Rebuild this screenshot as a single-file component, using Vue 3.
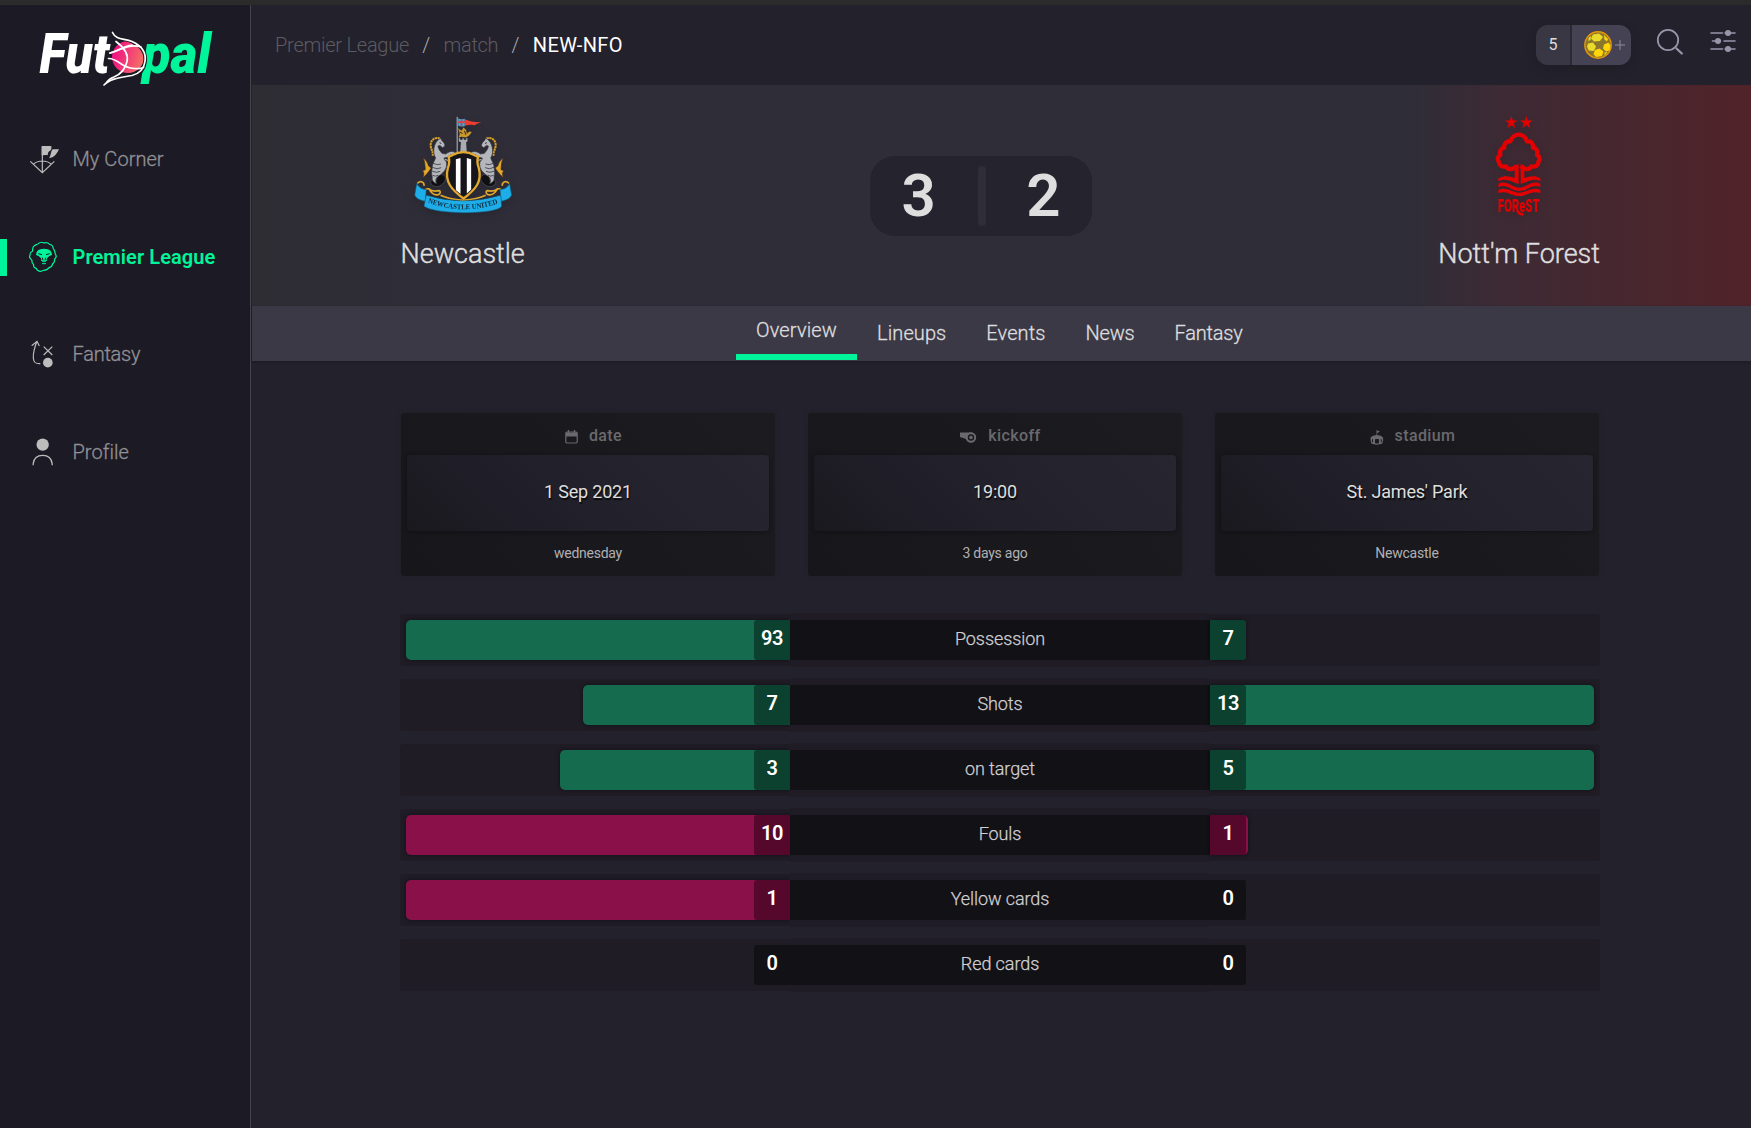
<script setup>
const nav = [
  { id: 'corner', label: 'My Corner' },
  { id: 'league', label: 'Premier League', active: true },
  { id: 'fantasy', label: 'Fantasy' },
  { id: 'profile', label: 'Profile' },
]
const tabs = ['Overview', 'Lineups', 'Events', 'News', 'Fantasy']
const cards = [
  { id: 'date', label: 'date', value: '1 Sep 2021', note: 'wednesday' },
  { id: 'kickoff', label: 'kickoff', value: '19:00', note: '3 days ago' },
  { id: 'stadium', label: 'stadium', value: "St. James' Park", note: 'Newcastle' },
]
const stats = [
  { label: 'Possession', home: 93, away: 7, tone: 'good' },
  { label: 'Shots', home: 7, away: 13, tone: 'good' },
  { label: 'on target', home: 3, away: 5, tone: 'good' },
  { label: 'Fouls', home: 10, away: 1, tone: 'bad' },
  { label: 'Yellow cards', home: 1, away: 0, tone: 'bad' },
  { label: 'Red cards', home: 0, away: 0, tone: 'bad' },
]
const share = (v, s) => (v ? (v / Math.max(s.home, s.away)) * 100 : 0) + '%'
</script>

<template>
  <div class="page">
    <div class="strip"></div>
    <div class="shell">
      <aside class="sidebar">
        <svg class="logo" viewBox="-10 -10 210 86" width="210" height="86">
          <defs>
            <linearGradient id="ball" x1="0" x2="1" y1="0.3" y2="0.6">
              <stop offset="0.1" stop-color="#ef1583" />
              <stop offset="0.95" stop-color="#f56c66" />
            </linearGradient>
          </defs>
          <text x="2.500" y="48" textLength="70" lengthAdjust="spacingAndGlyphs" class="word" fill="#fff">Fut</text>
          <text x="105.500" y="48" textLength="68.500" lengthAdjust="spacingAndGlyphs" class="word" fill="#00f59b">pal</text>
          <circle cx="91" cy="32" r="16" fill="url(#ball)" />
          <path d="M75.500 7.500c3.500 8 12 5.500 19.500 9 9 4 14.500 11 13 21-1 7-5 12-13 14-11 2-22 3-28 9" fill="none" stroke="#1c1a24" stroke-width="3.600" />
          <g fill="none" stroke="#fff" stroke-width="1.700" stroke-linecap="round">
            <path d="M75.500 7.500c3.500 8 12 5.500 19.500 9 9 4 14.500 11 13 20-1 7-5 12-13 14-11 2-22 3-28 9.500" />
            <path d="M79 16.500c8 6 13 12 11 20-2 9-7 13-13 15.500-3 1-5.500 2.500-7 5" />
            <path d="M73 28c6-1 13-7 22-8" /><path d="M73 28c9-2 20-10 31-6" />
            <path d="M71.500 33.500c8-.5 13 8 22 9.500 6 1 10 1 13-.5" />
          </g>
        </svg>
        <nav>
          <a v-for="n in nav" :key="n.label" class="item" :class="{ active: n.active }">
            <svg v-if="n.id === 'corner'" class="ico" viewBox="80 426 96 102" width="32" height="34" fill="none" stroke="#bdbdbd" stroke-width="3.500">
              <path d="M90 484l36 34 36-34M99 493c8-8 16-10 27-10s19 2 27 10M126 440v76" />
              <path d="M124 438h29v10c-5 8-10 4-11 18-6-2-10 0-18 0zM157 448h19c-8 16-15 25-30 26 7-8 4-18 11-26z" fill="#bdbdbd" stroke="none" />
            </svg>
            <svg v-else-if="n.id === 'league'" class="ico" viewBox="79 60 96 102" width="32" height="34" fill="none" stroke="#00f59b" stroke-width="3.600" stroke-linejoin="round">
              <path d="M101 77c5-1 6-5 11-5 4-5 12-6 17-3 7-2 14 0 18 4 8 1 10 6 11 13 5 5 5 11 6 16 4 6 2 12-2 15 0 7-1 12-6 14-1 7-5 11-11 12-4 6-10 8-16 8-5 3-13 4-18 0-4-1-3-4-4-6-6-1-9-5-8-11-5-4-6-8-5-13l-7-8c-2-4 2-7 1-10 0-6 4-8 8-10-1-8 0-13 5-16z" />
              <path d="M108 96c4-7 12-10 22-10s18 3 22 10l2 9-8 3-7 7-2 8h-14l-2-8-7-7-8-3z" fill="#00f59b" stroke="none" />
              <path d="M113 101l11 3M147 101l-11 3M125 113l2 8M135 113l-2 8" stroke="#1c1a24" stroke-width="3" />
              <path d="M123 120c0 4 3 5 7 5s7-1 7-5M124 131h12" stroke-width="3" />
            </svg>
            <svg v-else-if="n.id === 'fantasy'" class="ico" viewBox="82 355 96 102" width="32" height="34" fill="none" stroke="#bdbdbd" stroke-width="3.600">
              <path d="M96 381l16-13 7 14M112 368c-8 20-12 35-11 50 1 13 6 18 21 17M132 384l26 25M158 384l-26 25" />
              <circle cx="144.500" cy="432" r="14.500" fill="#bdbdbd" stroke="none" />
            </svg>
            <svg v-else class="ico" viewBox="82 646 96 102" width="32" height="34" fill="none" stroke="#bdbdbd" stroke-width="3.800">
              <circle cx="129" cy="675" r="18.500" fill="#bdbdbd" stroke="none" />
              <path d="M100.500 737v-5c2-16 13-25 28.500-25s26.500 9 28.500 25v5" />
            </svg>
            <span :class="'t-' + n.id">{{ n.label }}</span>
          </a>
        </nav>
      </aside>

      <main>
        <header class="top">
          <div class="crumbs">
            <span class="c1">Premier League</span><i>/</i><span class="c2">match</span><i>/</i><b>NEW-NFO</b>
          </div>
          <div class="tools">
            <div class="coins">
              <span class="count">5</span>
              <span class="buy">
                <svg viewBox="0 0 28 28" width="28" height="28">
                  <circle cx="14" cy="14" r="13.200" fill="#8b762c" stroke="#e8960a" stroke-width="1.400" />
                  <g fill="#ffd60a">
                    <path d="M9 3.500l6-1 4 3.500-3 4-6 .500-3-3z" fill="#e9da2b" />
                    <path d="M4 12.500l5-1 3 4-2 4.500-5.500-.500-1.500-4z" fill="#e9da2b" />
                    <path d="M11 19l4.500-1.500 4 3-1.500 4.500-6 1-2.500-3z" />
                    <path d="M20 13.500l4.500-2 2 3-1 5-3.500 1-3-3z" />
                    <path d="M20 4l4 4-1 2.500-2.500-2z" /><path d="M5 6.500L7 5l-.500 4-2.500 1z" fill="#e9da2b" /><path d="M20.500 21.500l3-.500-3 3.500z" />
                  </g>
                </svg>
                <svg viewBox="0 0 10 10" width="10" height="10" stroke="#8e8b9d" stroke-width="1"><path d="M5 0v10M0 5h10" /></svg>
              </span>
            </div>
            <svg class="search" viewBox="0 0 28 28" width="28" height="28" fill="none" stroke="#9895aa" stroke-linecap="round">
              <circle cx="12" cy="12" r="10.200" stroke-width="1.800" /><path d="M20.500 20.500l5.300 5" stroke-width="2.300" />
            </svg>
            <svg class="sliders" viewBox="0 0 26 24" width="26" height="24" stroke="#9895aa" stroke-width="1.600" stroke-linecap="round">
              <path d="M1 4h11.500M15 4h10M2.500 12h8M14 12h11M1 20h11.500M15 20h10" />
              <g fill="#9895aa" stroke="none"><circle cx="18" cy="4" r="3" /><circle cx="8" cy="12" r="3" /><circle cx="18" cy="20" r="3" /></g>
            </svg>
          </div>
        </header>

        <section class="hero">
          <div class="club home">
            <svg class="crest" viewBox="70 45 295 303" width="98" height="101">
              <path d="M200 50v108" stroke="#b9bbc0" stroke-width="3" />
              <path d="M203 55q10 4 20 1v22q-10 3-20-1z" fill="#3aa6dc" /><path d="M203 66h20M213 57v21" stroke="#e33c3c" stroke-width="5" />
              <path d="M223 57q20 10 50 9-16 4-20 9-16-3-30 2z" fill="#ee3d30" />
              <path d="M203 84l10 8 6-10 8 8 2 10 8-6 7 2-8 10-10 6-12-2-10 2 4-10z" fill="#c9982a" /><path d="M208 96l8 4M222 92l4 12" stroke="#30251a" stroke-width="3" />
              <path d="M204 113h6v5h5v-5h6v5h5v-5h6v13h-4l2 32h-22l2-32h-6z" fill="#a9abb1" stroke="#26242c" stroke-width="2" />
              <g id="horse">
                <path d="M148 115c-16-5-27 5-28 19 0 14 9 21 6 33" fill="none" stroke="#d9a127" stroke-width="6" stroke-dasharray="7 1.500" />
                <path d="M97 173c10 7 14 15 17 25l8 6-7 10c-6 7-10 13-18 19 3-10 4-16-2-21l9-3c-1-11-1-25-7-36z" fill="#e3a62b" stroke="#33291f" stroke-width="2" />
                <path d="M138 228c22-12 35 3 22 20-9 12-25 16-36 7-8-8-3-18 6-16-2 9 12 7 8-11z" fill="#101014" stroke="#55565c" stroke-width="2" />
                <path d="M150 114l4 8c6 4 9 10 9 16l-7 5-8-7-6 2c1 10 8 16 12 22l12 2c8-7 18-10 28-5l2 6c-12-3-18 2-26 9l-10 2c8 8 10 18 7 28-4 14-14 20-24 27-8 6-10 14-4 22-10-2-16-10-14-20-4-12-1-18 0-30 0-12 8-18 10-28-10-12-8-46 15-59z" fill="#b4b6bc" stroke="#35343b" stroke-width="2" />
                <path d="M127 190q14 7 24 2M125 202q15 8 27 1M125 214q13 6 24 0M126 226q9 5 17 0M160 178q12 6 17 18l-5 14" fill="none" stroke="#393a42" stroke-width="2.500" />
                <path d="M163 178q15 2 15 18 0 12-10 18" fill="none" stroke="#a4a6ac" stroke-width="4" />
                <path d="M147 128l5 2" stroke="#222" stroke-width="3" />
                <path d="M80 250c12-10 22-2 20 8M103 287c-6-16 1-22 12-20 8 8 16 8 30 5 8 2 3 14-7 13-10 0-18-9-23-18M150 286q25 12 68 15" fill="none" stroke="#dda72c" stroke-width="5" />
                <path d="M78 251c7 12 17 18 29 18l-3 35c-18-3-28-9-32-19z" fill="#1daeea" stroke="#14516c" stroke-width="2" />
              </g>
              <use href="#horse" transform="matrix(-1 0 0 1 436 0)" />
              <path d="M174 170c12-1 17-14 45-14s32 13 44 14c-4 13-4 20 2 34 11 42-11 66-46 92-35-26-58-50-47-92 6-14 6-21 2-34z" fill="#16151a" stroke="#e3a92e" stroke-width="7" stroke-linejoin="round" />
              <path d="M196 178l14-4v108l-14-12zM229 174l13 4v91l-13 12z" fill="#fff" />
              <path d="M107 286q110 34 224 0l3 33q-12 18-117 20-95-3-117-20z" fill="#1daeea" stroke="#14516c" stroke-width="1.500" />
              <path id="scroll" d="M111 308q107 41 219 0" fill="none" />
              <text class="motto"><textPath href="#scroll" textLength="216" lengthAdjust="spacingAndGlyphs">NEWCASTLE UNITED</textPath></text>
            </svg>
            <h2>Newcastle</h2>
          </div>
          <div class="score"><span>3</span><i></i><span>2</span></div>
          <div class="club away">
            <svg class="crest" viewBox="176 40 240 320" width="80" height="106.700" fill="#e30000">
              <path id="star" d="M273 46l4.600 13.500h14.400l-11.600 8.500 4.400 14-11.800-8.500-11.800 8.500 4.400-14-11.600-8.500h14.400z" />
              <use href="#star" x="45" />
              <path d="M289 196c-12 12-27 12-32 1-12 3-22-3-21-13-7-8-3-18 4-21-3-12 2-21 12-22-2-12 7-21 18-19 5-15 17-20 25-20s20 5 25 20c11-2 20 7 18 19 10 1 15 10 12 22 7 3 11 13 4 21 1 10-9 16-21 13-5 11-20 11-32-1" fill="none" stroke="#e30000" stroke-width="13" stroke-linejoin="round" />
              <path d="M283 194l12-3v59l-17-6c-13-6-25-10-44-2v-9c18-10 32-7 49-1zM312 194l-11-3v59l17-6c13-6 24-10 42-2v-9c-17-10-31-7-48-1z" />
              <path d="M234 249c26-12 40 12 63 12s37-24 63-12v10c-26-11-38 12-63 12s-37-23-63-12z" />
              <path d="M234 268c26-11 40 8 63 8s37-19 63-8v10c-26-11-38 8-63 8s-37-19-63-8z" />
              <text x="233" y="333" textLength="125" lengthAdjust="spacingAndGlyphs" class="forest">FOReST</text>
              <path d="M288 331c2 7 7 14 21 14v-8c-7 0-10-2-12-6z" />
            </svg>
            <h2>Nott'm Forest</h2>
          </div>
        </section>

        <div class="tabs">
          <a v-for="(t, i) in tabs" :key="t" :class="['tab' + i, { on: i === 0 }]">{{ t }}</a>
        </div>

        <section class="cards">
          <article v-for="c in cards" :key="c.id" :class="c.id">
            <h3>
              <svg v-if="c.id === 'date'" viewBox="0 0 13 14" width="13" height="14" fill="none" stroke="#6a696e">
                <rect x=".8" y="2" width="11.400" height="11" rx="1.200" stroke-width="1.200" /><path d="M1 4.500h11" stroke-width="4" /><path d="M3.500 0v3M9.500 0v3" stroke-width="1.400" />
              </svg>
              <svg v-else-if="c.id === 'kickoff'" viewBox="0 0 17 13" width="17" height="13" fill="none">
                <path d="M0 1.500h12a5 5 0 1 1-6 6.500L0 6z" fill="#6a696e" /><circle cx="11" cy="6.500" r="4.200" stroke="#6a696e" stroke-width="2" fill="#1b1a1f" /><circle cx="11" cy="6.500" r="1.800" fill="#6a696e" />
              </svg>
              <svg v-else viewBox="0 0 14 15" width="14" height="15" fill="#6a696e">
                <path d="M6.500 0l3.500 1.800-2.800 1.300V5c3.500.2 6 2 6 3.500s-.4 4-1 5c-2.800 1.500-8 1.500-10.800 0C.8 12 .5 10 .5 8.500.500 7 3 5.200 6.500 5z" /><path d="M2.500 9.200v3M5.500 9.500h3v3.500h-3zM11.300 9.200v3" stroke="#1b1a1f" fill="#1b1a1f" />
              </svg>
              <span>{{ c.label }}</span>
            </h3>
            <div class="value"><span>{{ c.value }}</span></div>
            <p><span>{{ c.note }}</span></p>
          </article>
        </section>

        <section class="stats">
          <div v-for="s in stats" :key="s.label" class="row" :class="s.tone">
            <div class="side left">
              <div class="bar" :class="{ zero: !s.home }" :style="{ width: share(s.home, s) }"><b>{{ s.home }}</b></div>
            </div>
            <div class="label"><span>{{ s.label }}</span></div>
            <div class="side right">
              <div class="bar" :class="{ zero: !s.away }" :style="{ width: share(s.away, s) }"><b>{{ s.away }}</b></div>
            </div>
          </div>
        </section>
      </main>
    </div>
  </div>
</template>

<style>
body { background: #23212b; }
</style>
<style scoped>
.page { height: 1128px; font-family: Roboto, sans-serif; font-weight: 400; background: #23212b; color: #dedede; display: flex; flex-direction: column; overflow: hidden; }
.strip { height: 5px; background: #2b2b2b; flex: none; }
.shell { flex: 1; display: flex; }
.sidebar { width: 250px; flex: none; background: #1c1a24; border-right: 1px solid #454448; margin-right: 1px; }
.logo { display: block; margin: 10px 0 0 27px; }
.word { font: italic 900 56px Roboto, sans-serif; }
nav { display: flex; flex-direction: column; margin-top: 9.500px; }
.item { height: 97.500px; display: flex; align-items: center; font-size: 20px; font-weight: 300; color: #929196; -webkit-text-stroke: 0.300px; letter-spacing: 0.050px; position: relative; }
.ico { margin-left: 27px; margin-right: 13.500px; flex: none; }
.item.active { color: #00f59b; font-weight: 600; -webkit-text-stroke: 0; }
.item.active::before { content: ""; position: absolute; left: 0; top: 30.500px; width: 6.500px; height: 37.500px; background: #00f59b; }
.item .t-league { letter-spacing: 0.080px; }
.item .t-fantasy { letter-spacing: -0.250px; }

main { flex: 1; min-width: 0; display: flex; flex-direction: column; }
.top { height: 80px; flex: none; display: flex; justify-content: space-between; }
.crumbs { display: flex; align-items: center; font-size: 20px; font-weight: 300; padding-left: 23px; height: 79px; color: #5d5b62; }
.crumbs i { font-style: normal; color: #aaa9ad; width: 34.500px; text-align: center; }
.crumbs b { font-weight: 400; color: #fff; letter-spacing: 0.400px; }
.c1 { letter-spacing: -0.240px; }
.c2 { letter-spacing: -0.300px; }
.tools { display: flex; }
.coins { width: 95px; height: 40px; margin-top: 20px; display: flex; gap: 2px; background: #2b2935; border-radius: 12px; overflow: hidden; box-shadow: 0 4px 12px rgba(0, 0, 0, 0.120); }
.count { width: 34px; background: #393744; font-size: 16px; line-height: 40px; text-align: center; }
.buy { flex: 1; background: #454253; display: flex; align-items: center; gap: 3px; padding-left: 12px; }
.search { margin: 23px 0 0 24.500px; }
.sliders { margin: 24px 15px 0 26.500px; }

.hero { height: 221px; flex: none; display: flex; justify-content: space-between; background: linear-gradient(90deg, #2e2d34 0, #2f2d38 14%, #2f2d38 77%, #3e2a34 84%, #4b262d 94%, #502329 100%); }
.club { display: flex; flex-direction: column; align-items: center; padding-top: 29.500px; }
.club h2 { margin: 22.500px 0 0; font-size: 27px; line-height: 32px; font-weight: 300; white-space: nowrap; -webkit-text-stroke: 0.450px; }
.crest { filter: drop-shadow(0 3px 4px rgba(0, 0, 0, 0.150)); flex: none; overflow: visible; }
.home { margin-left: 148.500px; }
.away { margin-right: 151px; padding-top: 28.500px; }
.away h2 { margin-top: 17.800px; }
.motto { font: bold 22px "Liberation Serif", serif; fill: #102a3c; }
.forest { font: 900 56px Roboto, sans-serif; }
.score { width: 222px; height: 80px; margin: 71px 0 0 -1px; border-radius: 25px; background: #25232d; display: flex; align-items: center; font-size: 60px; font-weight: 600; }
.score span { flex: 1; text-align: center; padding: 0 11px 2px 0; }
.score span:last-child { padding: 0 0 2px 9px; }
.score i { width: 7.500px; height: 60px; border-radius: 4px; background: #2f2d38; }

.tabs { height: 55px; flex: none; background: #3c3947; padding-left: 484px; display: flex; font-size: 20px; font-weight: 300; -webkit-text-stroke: 0.300px; box-shadow: 0 1px 3px rgba(0, 0, 0, 0.250); }
.tabs a { padding: 0 20px; line-height: 55px; }
.tabs .on { line-height: 48px; box-sizing: border-box; height: 54px; border-bottom: 6.500px solid #00f59b; }
.tab0 { letter-spacing: 0.150px; }
.tab1, .tab2 { letter-spacing: 0.100px; }
.tab3, .tab4 { letter-spacing: -0.200px; }

.cards { display: flex; gap: 33px; margin: 52px 0 0 149px; }
.cards article { width: 374px; height: 163px; box-sizing: border-box; padding: 0 6px; display: flex; flex-direction: column; background: linear-gradient(45deg, #17161b, #1c1b20); border-radius: 3px; box-shadow: 0 0 5px rgba(0, 0, 0, 0.120); }
.cards .stadium { width: 384px; }
.cards h3 { height: 42px; margin: 0; padding-left: 11px; display: flex; justify-content: center; align-items: center; gap: 11px; font-size: 16px; font-weight: 500; letter-spacing: 0.400px; color: #6a696e; }
.cards h3 svg { margin-top: 6px; }
.cards h3 span { margin-top: 3px; }
.value { height: 76px; display: flex; align-items: center; justify-content: center; border-radius: 4px; background: linear-gradient(45deg, #1a191e 0, #1e1c25 22%, #23212b 55%, #272530); font-size: 18px; letter-spacing: -0.200px; text-shadow: 1px 2px 1px #0a0a0c; box-shadow: 0 1px 4px rgba(0, 0, 0, 0.350); }
.value span { margin-top: -3px; }
.cards p { margin: 0; flex: 1; display: flex; align-items: center; justify-content: center; font-size: 14px; letter-spacing: -0.250px; color: #b0b0b2; }
.cards p span { margin-top: -1px; }

.stats { margin: 38px 0 0 148px; width: 1200px; display: flex; flex-direction: column; gap: 13px; }
.row { height: 52px; display: flex; background: #1f1c26; border-radius: 4px; }
.side { width: 384px; padding: 6px 0; display: flex; }
.left { padding-left: 6px; justify-content: flex-end; }
.right { padding-right: 6px; }
.bar { min-width: 36px; display: flex; background: #156b4e; box-shadow: 0 0 4px rgba(0, 0, 0, 0.500); }
.left .bar { justify-content: flex-end; border-radius: 5px 0 0 5px; }
.right .bar { border-radius: 0 5px 5px 0; }
.bar b { width: 36px; line-height: 37px; font-size: 20px; font-weight: 600; color: #fff; text-align: center; background: #0c402f; letter-spacing: -0.400px; }
.right .bar b { border-radius: 0 3px 3px 0; }
.left .bar b { border-radius: 3px 0 0 3px; }
.bad .bar { background: #8a1049; }
.bad .bar b { background: #55082c; }
.bad .bar.zero { background: none; box-shadow: none; }
.bad .bar.zero b { background: #121116; }
.label { width: 420px; margin: -1px 0; background: #1f1c26; padding: 7px 0; display: flex; }
.label span { flex: 1; background: #121116; text-align: center; font-size: 18px; font-weight: 300; -webkit-text-stroke: 0.250px; line-height: 37px; letter-spacing: -0.080px; color: #d0d0d2; }
</style>
